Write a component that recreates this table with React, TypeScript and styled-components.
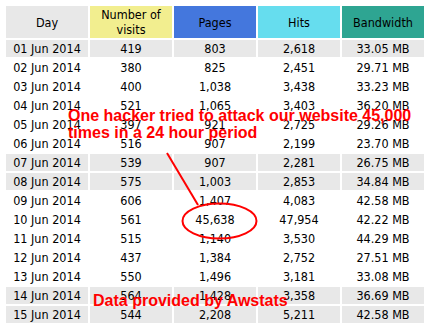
import React from 'react';
import styled, { createGlobalStyle } from 'styled-components';

type Row = [string, string, string, string, string];

const rows: Row[] = [
  ['01 Jun 2014', '419', '803', '2,618', '33.05 MB'],
  ['02 Jun 2014', '380', '825', '2,451', '29.71 MB'],
  ['03 Jun 2014', '400', '1,038', '3,438', '33.23 MB'],
  ['04 Jun 2014', '521', '1,065', '3,403', '36.20 MB'],
  ['05 Jun 2014', '397', '921', '2,725', '29.26 MB'],
  ['06 Jun 2014', '516', '907', '2,199', '23.70 MB'],
  ['07 Jun 2014', '539', '907', '2,281', '26.75 MB'],
  ['08 Jun 2014', '575', '1,003', '2,853', '34.84 MB'],
  ['09 Jun 2014', '606', '1,407', '4,083', '42.58 MB'],
  ['10 Jun 2014', '561', '45,638', '47,954', '42.22 MB'],
  ['11 Jun 2014', '515', '1,140', '3,530', '44.29 MB'],
  ['12 Jun 2014', '437', '1,384', '2,752', '27.51 MB'],
  ['13 Jun 2014', '550', '1,496', '3,181', '33.08 MB'],
  ['14 Jun 2014', '564', '1,428', '3,358', '36.69 MB'],
  ['15 Jun 2014', '544', '2,208', '5,211', '42.58 MB'],
];

// weekend rows are shaded
const shaded = new Set([0, 6, 7, 13, 14]);

const headers: { label: React.ReactNode; bg: string }[] = [
  { label: 'Day', bg: '#e8e8e8' },
  { label: <>Number of<br />visits</>, bg: '#f2ee8f' },
  { label: 'Pages', bg: '#4477dd' },
  { label: 'Hits', bg: '#66ddee' },
  { label: 'Bandwidth', bg: '#2ea592' },
];

const GlobalStyle = createGlobalStyle`
  html, body {
    margin: 0;
    padding: 0;
    background: #fff;
  }
`;

const Frame = styled.div`
  position: relative;
  width: 427px;
  height: 324px;
  overflow: hidden;
  padding: 4px 0 0 4px;
  box-sizing: border-box;
  background: #fff;
`;

const Table = styled.table`
  border-collapse: separate;
  border-spacing: 2px;
  font-family: "DejaVu Sans Condensed", "DejaVu Sans", Verdana, sans-serif;
  font-size: 12.5px;
  color: #000;
`;

const HeadCell = styled.th<{ $bg: string }>`
  width: 82px;
  height: 32px;
  padding: 0;
  background: ${p => p.$bg};
  font-weight: normal;
  line-height: 15px;
  text-align: center;
  vertical-align: middle;
`;

const Cell = styled.td<{ $shaded: boolean }>`
  width: 82px;
  height: 17px;
  padding: 0;
  text-align: center;
  line-height: 17px;
  background: ${p => (p.$shaded ? '#e8e8e8' : 'transparent')};
`;

const Note = styled.div<{ $top: number; $left: number }>`
  position: absolute;
  top: ${p => p.$top}px;
  left: ${p => p.$left}px;
  font-family: "Liberation Sans", Arial, sans-serif;
  font-weight: bold;
  font-size: 16px;
  line-height: 17px;
  color: #ff0000;
  white-space: nowrap;
`;

const Overlay = styled.svg`
  position: absolute;
  top: 0;
  left: 0;
  pointer-events: none;
`;

export default function App() {
  return (
    <Frame>
      <GlobalStyle />
      <Table>
        <thead>
          <tr>
            {headers.map((h, i) => (
              <HeadCell key={i} $bg={h.bg}>{h.label}</HeadCell>
            ))}
          </tr>
        </thead>
        <tbody>
          {rows.map((r, i) => (
            <tr key={r[0]}>
              {r.map((v, j) => (
                <Cell key={j} $shaded={shaded.has(i)}>{v}</Cell>
              ))}
            </tr>
          ))}
        </tbody>
      </Table>
      <Overlay width="427" height="324" viewBox="0 0 427 324">
        <line x1="167" y1="153" x2="198" y2="205" stroke="#ff0000" strokeWidth="2" />
        <ellipse cx="219.5" cy="221" rx="37" ry="17.5" fill="none" stroke="#ff0000" strokeWidth="2" />
      </Overlay>
      <Note $top={107} $left={68}>
        One hacker tried to attack our website 45,000<br />
        times in a 24 hour period
      </Note>
      <Note $top={292} $left={93}>Data provided by Awstats</Note>
    </Frame>
  );
}
